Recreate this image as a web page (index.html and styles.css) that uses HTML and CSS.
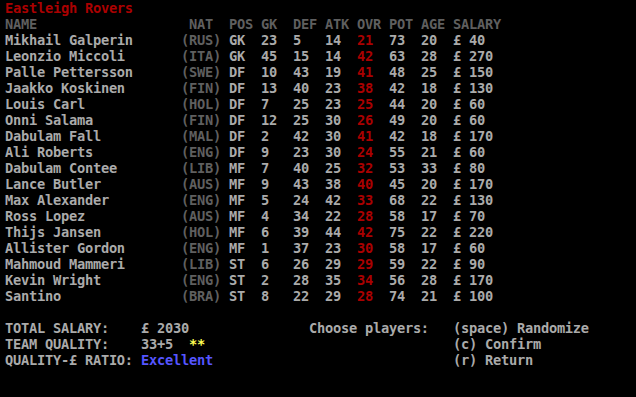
FILE: index.html
```html
<!DOCTYPE html>
<html>
<head>
    <title>Eastleigh Rovers</title>
    <link rel="stylesheet" href="styles.css">
</head>
<body>
    <div class="screen">
        <div class="title">Eastleigh Rovers</div>
        <div class="row head">
            <span class="name">NAME</span><span class="nat">&nbsp;NAT</span><span class="num">POS</span><span class="num">GK</span><span class="num">DEF</span><span class="num">ATK</span><span class="num">OVR</span><span class="num">POT</span><span class="num">AGE</span><span>SALARY</span>
        </div>
        <div class="row"><span class="name">Mikhail Galperin</span><span class="nat dim">(RUS)</span><span class="num">GK</span><span class="num">23</span><span class="num">5</span><span class="num">14</span><span class="num ovr">21</span><span class="num">73</span><span class="num">20</span><span>£ 40</span></div>
        <div class="row"><span class="name">Leonzio Miccoli</span><span class="nat dim">(ITA)</span><span class="num">GK</span><span class="num">45</span><span class="num">15</span><span class="num">14</span><span class="num ovr">42</span><span class="num">63</span><span class="num">28</span><span>£ 270</span></div>
        <div class="row"><span class="name">Palle Pettersson</span><span class="nat dim">(SWE)</span><span class="num">DF</span><span class="num">10</span><span class="num">43</span><span class="num">19</span><span class="num ovr">41</span><span class="num">48</span><span class="num">25</span><span>£ 150</span></div>
        <div class="row"><span class="name">Jaakko Koskinen</span><span class="nat dim">(FIN)</span><span class="num">DF</span><span class="num">13</span><span class="num">40</span><span class="num">23</span><span class="num ovr">38</span><span class="num">42</span><span class="num">18</span><span>£ 130</span></div>
        <div class="row"><span class="name">Louis Carl</span><span class="nat dim">(HOL)</span><span class="num">DF</span><span class="num">7</span><span class="num">25</span><span class="num">23</span><span class="num ovr">25</span><span class="num">44</span><span class="num">20</span><span>£ 60</span></div>
        <div class="row"><span class="name">Onni Salama</span><span class="nat dim">(FIN)</span><span class="num">DF</span><span class="num">12</span><span class="num">25</span><span class="num">30</span><span class="num ovr">26</span><span class="num">49</span><span class="num">20</span><span>£ 60</span></div>
        <div class="row"><span class="name">Dabulam Fall</span><span class="nat dim">(MAL)</span><span class="num">DF</span><span class="num">2</span><span class="num">42</span><span class="num">30</span><span class="num ovr">41</span><span class="num">42</span><span class="num">18</span><span>£ 170</span></div>
        <div class="row"><span class="name">Ali Roberts</span><span class="nat dim">(ENG)</span><span class="num">DF</span><span class="num">9</span><span class="num">23</span><span class="num">30</span><span class="num ovr">24</span><span class="num">55</span><span class="num">21</span><span>£ 60</span></div>
        <div class="row"><span class="name">Dabulam Contee</span><span class="nat dim">(LIB)</span><span class="num">MF</span><span class="num">7</span><span class="num">40</span><span class="num">25</span><span class="num ovr">32</span><span class="num">53</span><span class="num">33</span><span>£ 80</span></div>
        <div class="row"><span class="name">Lance Butler</span><span class="nat dim">(AUS)</span><span class="num">MF</span><span class="num">9</span><span class="num">43</span><span class="num">38</span><span class="num ovr">40</span><span class="num">45</span><span class="num">20</span><span>£ 170</span></div>
        <div class="row"><span class="name">Max Alexander</span><span class="nat dim">(ENG)</span><span class="num">MF</span><span class="num">5</span><span class="num">24</span><span class="num">42</span><span class="num ovr">33</span><span class="num">68</span><span class="num">22</span><span>£ 130</span></div>
        <div class="row"><span class="name">Ross Lopez</span><span class="nat dim">(AUS)</span><span class="num">MF</span><span class="num">4</span><span class="num">34</span><span class="num">22</span><span class="num ovr">28</span><span class="num">58</span><span class="num">17</span><span>£ 70</span></div>
        <div class="row"><span class="name">Thijs Jansen</span><span class="nat dim">(HOL)</span><span class="num">MF</span><span class="num">6</span><span class="num">39</span><span class="num">44</span><span class="num ovr">42</span><span class="num">75</span><span class="num">22</span><span>£ 220</span></div>
        <div class="row"><span class="name">Allister Gordon</span><span class="nat dim">(ENG)</span><span class="num">MF</span><span class="num">1</span><span class="num">37</span><span class="num">23</span><span class="num ovr">30</span><span class="num">58</span><span class="num">17</span><span>£ 60</span></div>
        <div class="row"><span class="name">Mahmoud Mammeri</span><span class="nat dim">(LIB)</span><span class="num">ST</span><span class="num">6</span><span class="num">26</span><span class="num">29</span><span class="num ovr">29</span><span class="num">59</span><span class="num">22</span><span>£ 90</span></div>
        <div class="row"><span class="name">Kevin Wright</span><span class="nat dim">(ENG)</span><span class="num">ST</span><span class="num">2</span><span class="num">28</span><span class="num">35</span><span class="num ovr">34</span><span class="num">56</span><span class="num">28</span><span>£ 170</span></div>
        <div class="row"><span class="name">Santino</span><span class="nat dim">(BRA)</span><span class="num">ST</span><span class="num">8</span><span class="num">22</span><span class="num">29</span><span class="num ovr">28</span><span class="num">74</span><span class="num">21</span><span>£ 100</span></div>

        <div class="footer">
            <div class="summary">
                <div class="row"><span class="label">TOTAL SALARY:</span><span>£ 2030</span></div>
                <div class="row"><span class="label">TEAM QUALITY:</span><span class="quality">33+5</span><span class="stars">**</span></div>
                <div class="row"><span class="label">QUALITY-£ RATIO:</span><span class="ratio">Excellent</span></div>
            </div>
            <div class="prompt">Choose players:</div>
            <div class="keys">
                <div>(space) Randomize</div>
                <div>(c) Confirm</div>
                <div>(r) Return</div>
            </div>
        </div>
    </div>
</body>
</html>
```

FILE: styles.css
```css
body {
    margin: 0;
    padding: 0;
    background: #000;
    color: #aaa;
    font-family: "DejaVu Sans Mono", "Liberation Mono", monospace;
    font-size: 13.7px;
    font-weight: bold;
    letter-spacing: -0.25px;
    line-height: 16px;
    overflow: hidden;
}
.screen {
    width: 636px;
    height: 397px;
    padding-left: 5px;
    white-space: nowrap;
}
.title {
    color: #aa0000;
}
.row {
    display: flex;
    height: 16px;
}
.head {
    color: #5f5f5f;
}
.name {
    width: 176px;
}
.nat {
    width: 48px;
}
.dim {
    color: #5f5f5f;
}
.num {
    width: 32px;
}
.ovr {
    color: #aa0000;
}
.footer {
    display: flex;
    margin-top: 16px;
}
.summary {
    width: 304px;
}
.label {
    width: 136px;
}
.quality {
    width: 48px;
}
.stars {
    color: #ffff55;
}
.ratio {
    color: #5555ff;
}
.prompt {
    width: 144px;
}
```
